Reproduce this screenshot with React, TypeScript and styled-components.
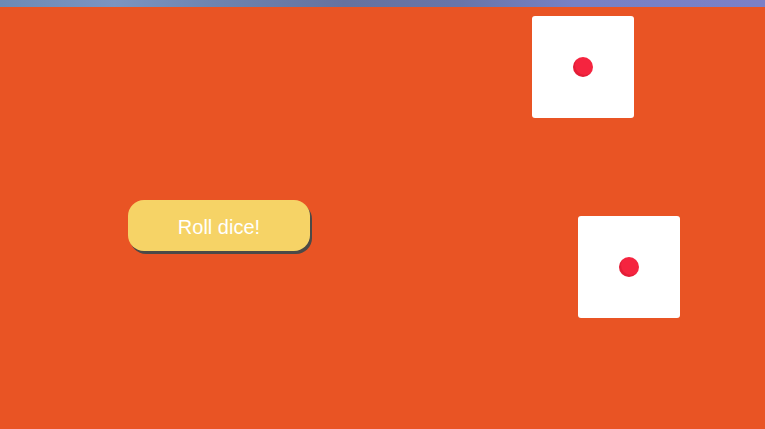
import React from "react";
import styled, { createGlobalStyle } from "styled-components";

const Global = createGlobalStyle`
  html, body { margin: 0; padding: 0; }
  body { font-family: "Liberation Sans", Arial, sans-serif; background: #e95424; overflow: hidden; }
`;

const Page = styled.div`
  width: 765px;
  height: 429px;
  display: flex;
  flex-direction: column;
`;

const TopBar = styled.div`
  height: 7px;
  flex: none;
  background: linear-gradient(90deg, #6c8ab5 0%, #7b94c1 15%, #6d84b0 28%, #65729f 45%, #6775a9 60%, #7681c5 75%, #7b80c7 100%);
`;

const Stage = styled.main`
  flex: 1;
  background: #e95424;
  display: flex;
  align-items: flex-start;
  padding-left: 128px;
`;

const ButtonArea = styled.div`
  padding-top: 193px;
`;

const RollButton = styled.button`
  width: 182px;
  height: 51px;
  border: none;
  border-radius: 16px;
  background: #f6d366;
  color: #ffffff;
  font-family: "Liberation Sans", Arial, sans-serif;
  font-size: 20px;
  line-height: 23px;
  box-shadow: 2px 3px 0 #4c4a47;
  cursor: pointer;
  padding: 3px 0 0;
`;

const DiceColumn = styled.div`
  margin-left: 222px;
  padding-top: 9px;
  display: flex;
  flex-direction: column;
  gap: 98px;
`;

const Die = styled.div<{ $shift: number }>`
  width: 102px;
  height: 102px;
  margin-left: ${(p) => p.$shift}px;
  background: #ffffff;
  border-radius: 3px;
  display: flex;
  align-items: center;
  justify-content: center;
`;

const Pip = styled.span`
  width: 20px;
  height: 20px;
  border-radius: 50%;
  background: #f5243f;
  box-shadow: inset 2px -2px 0 rgba(150, 0, 20, 0.18);
`;

export default function App() {
  return (
    <>
      <Global />
      <Page>
        <TopBar />
        <Stage>
          <ButtonArea>
            <RollButton>Roll dice!</RollButton>
          </ButtonArea>
          <DiceColumn>
            <Die $shift={0}>
              <Pip />
            </Die>
            <Die $shift={46}>
              <Pip />
            </Die>
          </DiceColumn>
        </Stage>
      </Page>
    </>
  );
}
